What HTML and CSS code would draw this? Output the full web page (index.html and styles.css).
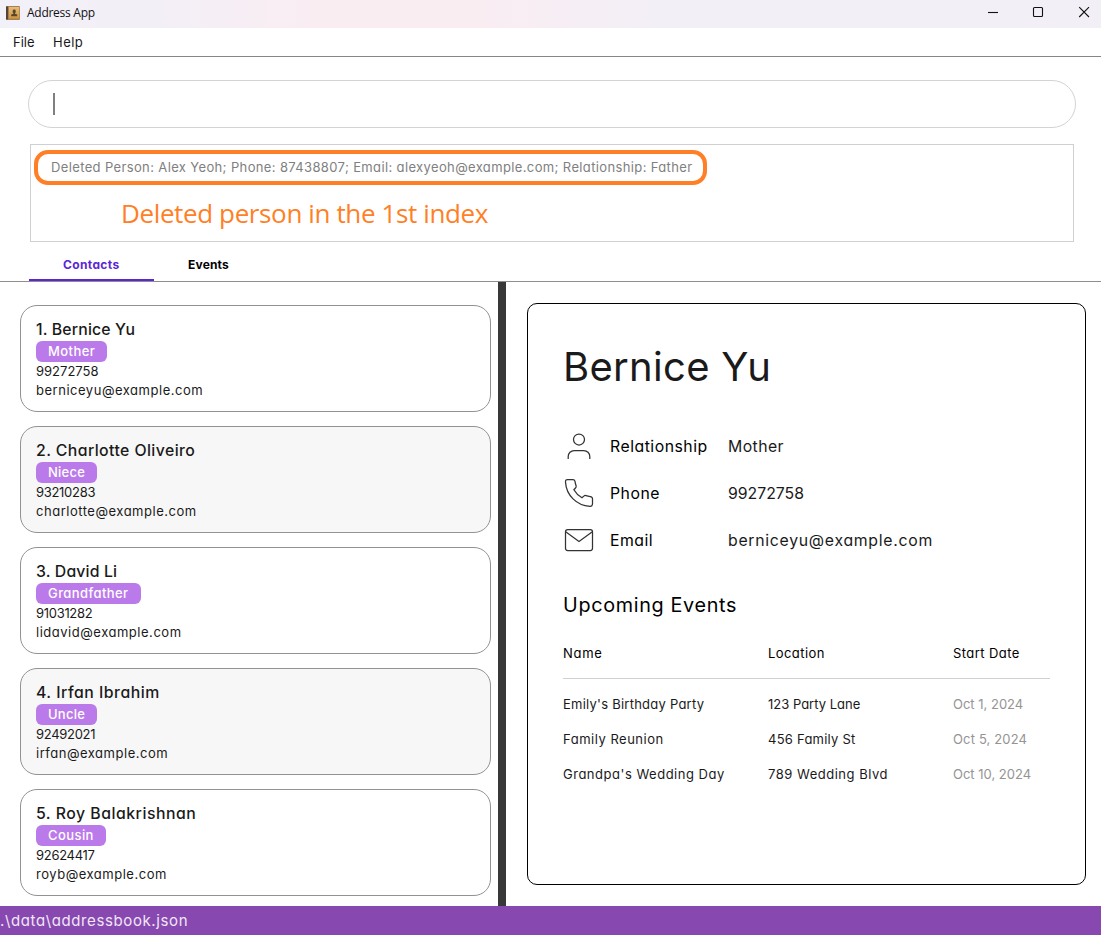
FILE: index.html
```
<!DOCTYPE html>
<html lang="en">
<head>
<meta charset="utf-8">
<title>Address App</title>
<link rel="stylesheet" href="styles.css">
</head>
<body>
<div class="window">
  <header class="titlebar">
    <svg class="app-icon" width="14" height="14" viewBox="0 0 14 14">
      <defs><linearGradient id="cover" x1="0" y1="0" x2="0" y2="1"><stop offset="0" stop-color="#e3bd80"/><stop offset="1" stop-color="#cf9544"/></linearGradient></defs>
      <rect width="14" height="14" rx="1" fill="#a8804a"/>
      <rect x="0" y="0.5" width="2" height="13" fill="#51443a"/>
      <rect x="3" y="1" width="10.3" height="11.5" fill="url(#cover)"/>
      <rect x="6.7" y="3.6" width="3" height="3.5" rx="1.2" fill="#5a4528"/>
      <path d="M7.4 6.5h1.6v1.3l2.2.7v1.7H5.2V8.5l2.2-.7z" fill="#5a4528"/>
    </svg>
    <span class="app-title">Address App</span>
    <div class="controls">
      <svg width="12" height="12" viewBox="0 0 12 12"><path d="M2 6.500h10"/></svg>
      <svg width="12" height="12" viewBox="0 0 12 12"><rect x="1.500" y="1.500" width="9" height="9" rx="1"/></svg>
      <svg width="12" height="12" viewBox="0 0 12 12"><path d="M1.200 1.200l9.800 9.800M11 1.200L1.200 11"/></svg>
    </div>
  </header>
  <nav class="menubar"><span>File</span><span class="ls-4">Help</span></nav>
  <section class="command">
    <div class="search"><i class="caret"></i></div>
    <div class="result">
      <p class="message">Deleted Person: Alex Yeoh; Phone: 87438807; Email: alexyeoh@example.com; Relationship: Father</p>
      <p class="annotation">Deleted person in the 1st index</p>
    </div>
  </section>
  <div class="tabs">
    <div class="tab active">Contacts</div>
    <div class="tab">Events</div>
  </div>
  <main class="body">
    <section class="contacts">
      <article class="card"><h2 class="ls-1">1. Bernice Yu</h2><span class="tag ls-4">Mother</span><p class="ls-0">99272758</p><p class="mail">berniceyu@example.com</p></article>
      <article class="card"><h2 class="ls-4">2. Charlotte Oliveiro</h2><span class="tag ls-2">Niece</span><p class="tight">93210283</p><p class="mail">charlotte@example.com</p></article>
      <article class="card"><h2 class="ls-1">3. David Li</h2><span class="tag ls-4">Grandfather</span><p class="tight">91031282</p><p class="mail">lidavid@example.com</p></article>
      <article class="card"><h2 class="ls-5">4. Irfan Ibrahim</h2><span class="tag ls-2">Uncle</span><p class="tight">92492021</p><p class="mail">irfan@example.com</p></article>
      <article class="card"><h2 class="ls-5">5. Roy Balakrishnan</h2><span class="tag ls-4">Cousin</span><p class="tight">92624417</p><p class="mail">royb@example.com</p></article>
    </section>
    <div class="divider"></div>
    <section class="detail-pane">
      <article class="detail">
        <h1>Bernice Yu</h1>
        <dl class="fields">
          <svg width="32" height="32" viewBox="0 0 32 32"><circle cx="16" cy="8.500" r="5.500"/><path d="M5.200 28v-2.500a6 6 0 0 1 6-6h9.600a6 6 0 0 1 6 6V28"/></svg>
          <dt class="ls-5">Relationship</dt><dd class="ls-4">Mother</dd>
          <svg width="32" height="32" viewBox="0 0 32 32"><path d="M4.500 1.500H9.800c1.300 0 2 .7 2.200 1.900.2 1.600.6 3 1.100 4.300.3.900 0 1.700-.6 2.300l-1.600 1.700c2 3.500 4.700 6.100 8.100 8.100l1.800-1.700c.7-.6 1.500-.8 2.300-.5 1.300.5 2.700.8 4.200 1 1.400.2 2.200 1 2.200 2.200v5c0 1.700-1 2.600-2.600 2.500C13.700 27.600 3.300 17.200 2.500 4.100 2.400 2.500 3 1.500 4.500 1.500z"/></svg>
          <dt class="ls-5">Phone</dt><dd class="ls-0">99272758</dd>
          <svg width="32" height="32" viewBox="0 0 32 32"><rect x="2.500" y="4.500" width="27" height="21" rx="2.200"/><path d="M3 7l13 9.400L29 7"/></svg>
          <dt class="ls-5">Email</dt><dd class="ls-7">berniceyu@example.com</dd>
        </dl>
        <h3>Upcoming Events</h3>
        <div class="row head"><span class="ls-7">Name</span><span class="ls-4">Location</span><span class="ls-4">Start Date</span></div>
        <div class="row"><span class="ls-2">Emily's Birthday Party</span><span class="ls-0">123 Party Lane</span><span class="date">Oct 1, 2024</span></div>
        <div class="row"><span class="ls-5">Family Reunion</span><span class="ls-2">456 Family St</span><span class="date ls-1">Oct 5, 2024</span></div>
        <div class="row"><span class="ls-5">Grandpa's Wedding Day</span><span class="ls-5">789 Wedding Blvd</span><span class="date">Oct 10, 2024</span></div>
      </article>
    </section>
  </main>
  <footer class="status">.\data\addressbook.json</footer>
</div>
</body>
</html>
```
FILE: styles.css
```
* { box-sizing: border-box; margin: 0; padding: 0; }
body { font: 13px/19px Inter, "Liberation Sans", sans-serif; font-feature-settings: "cv11"; color: #1a1a1a; background: #fff; }
.window { width: 1101px; height: 935px; display: flex; flex-direction: column; overflow: hidden; white-space: nowrap; }

/* Letter-spacing steps */
.ls-0 { letter-spacing: 0; }
.ls-1 { letter-spacing: 0.15px; }
.ls-2 { letter-spacing: 0.24px; }
.ls-4 { letter-spacing: 0.42px; }
.ls-5 { letter-spacing: 0.51px; }
.ls-7 { letter-spacing: 0.72px; }
.tight { letter-spacing: -0.3px; }

.titlebar { height: 28px; display: flex; align-items: center; padding: 0 11px 3px 6px; background: linear-gradient(90deg, #f2f0f8 0%, #f3eff7 14%, #faedf2 30%, #faedf2 42%, #f2eff7 62%, #f2eff7 100%); }
.app-icon { margin-right: 7px; }
.app-title { font: 12px/20px "Open Sans", sans-serif; letter-spacing: -0.27px; color: #111; }
.controls { margin-left: auto; display: flex; gap: 34px; padding-bottom: 1px; }
.controls svg { display: block; fill: none; stroke: #111; stroke-width: 1.1; }

.menubar { height: 29px; padding-left: 13px; border-bottom: 1px solid #868686; display: flex; gap: 18.5px; line-height: 29px; }

.command { padding: 23px 25px 0 28px; }
.search { height: 48px; border: 1px solid #d3d3d3; border-radius: 24px; display: flex; align-items: center; padding-left: 24px; }
.caret { width: 2px; height: 22px; background: #808080; }
.result { height: 98px; margin: 16px 2px 0; border: 1px solid #d0d0d0; padding: 5px 0 0 3px; }
.message { width: 673px; height: 35px; border: 4px solid #ff7f27; border-radius: 14px; padding-left: 13px; line-height: 26px; color: #808080; letter-spacing: 0.365px; }
.annotation { margin: 10px 0 0 87px; font: 26px/36px "Open Sans", sans-serif; letter-spacing: -0.38px; color: #ff7f27; }

.tabs { height: 40px; padding: 10px 0 0 29px; border-bottom: 1px solid #8e8e8e; display: flex; font-size: 12px; font-weight: 700; color: #000; }
.tab { width: 125px; padding-left: 34px; line-height: 25px; letter-spacing: 0.18px; }
.active { color: #5a26d6; border-bottom: 2px solid #5a26d6; letter-spacing: 0.36px; }

.body { height: 624px; display: flex; }
.contacts { width: 498px; padding: 23px 7px 0 20px; display: flex; flex-direction: column; gap: 14px; }
.card { height: 107px; border: 1px solid #929292; border-radius: 17px; padding: 12px 15px 0; display: flex; flex-direction: column; align-items: flex-start; }
.card:nth-child(even) { background: #f7f7f7; }
.card h2 { font-size: 15.8px; font-weight: 500; line-height: 23px; }
.tag { height: 21px; padding: 0 12px; border-radius: 6px; background: #bb7ae9; color: #fff; font-size: 13px; font-weight: 500; line-height: 21px; }
.mail { letter-spacing: 0.52px; }
.divider { width: 8px; background: #383838; }

.detail-pane { flex: 1; padding: 21px 15px 21px 21px; }
.detail { height: 582px; border: 1px solid #000; border-radius: 10px; padding: 33px 35px 0; }
.detail h1 { font-size: 40px; font-weight: 400; line-height: 60px; letter-spacing: 0.3px; }
.fields { margin-top: 26px; display: grid; grid-template-columns: 47px 118px 1fr; grid-auto-rows: 47px; align-items: center; font-size: 15.8px; }
.fields svg { fill: none; stroke: #333; stroke-width: 1.25; }
.fields dt { color: #000; }
.detail h3 { margin-top: 26px; font-size: 19.8px; font-weight: 400; line-height: 30px; letter-spacing: 0.67px; color: #000; }
.row { display: grid; grid-template-columns: 205px 185px 1fr; height: 35px; line-height: 35px; }
.head { height: 43px; margin: 16px 0 8px; border-bottom: 1px solid #d0d0d0; color: #000; }
.date { color: #949494; }

.status { height: 29px; background: #8748b0; color: #f0e6f6; font-size: 15px; line-height: 30px; letter-spacing: 0.61px; }
```
